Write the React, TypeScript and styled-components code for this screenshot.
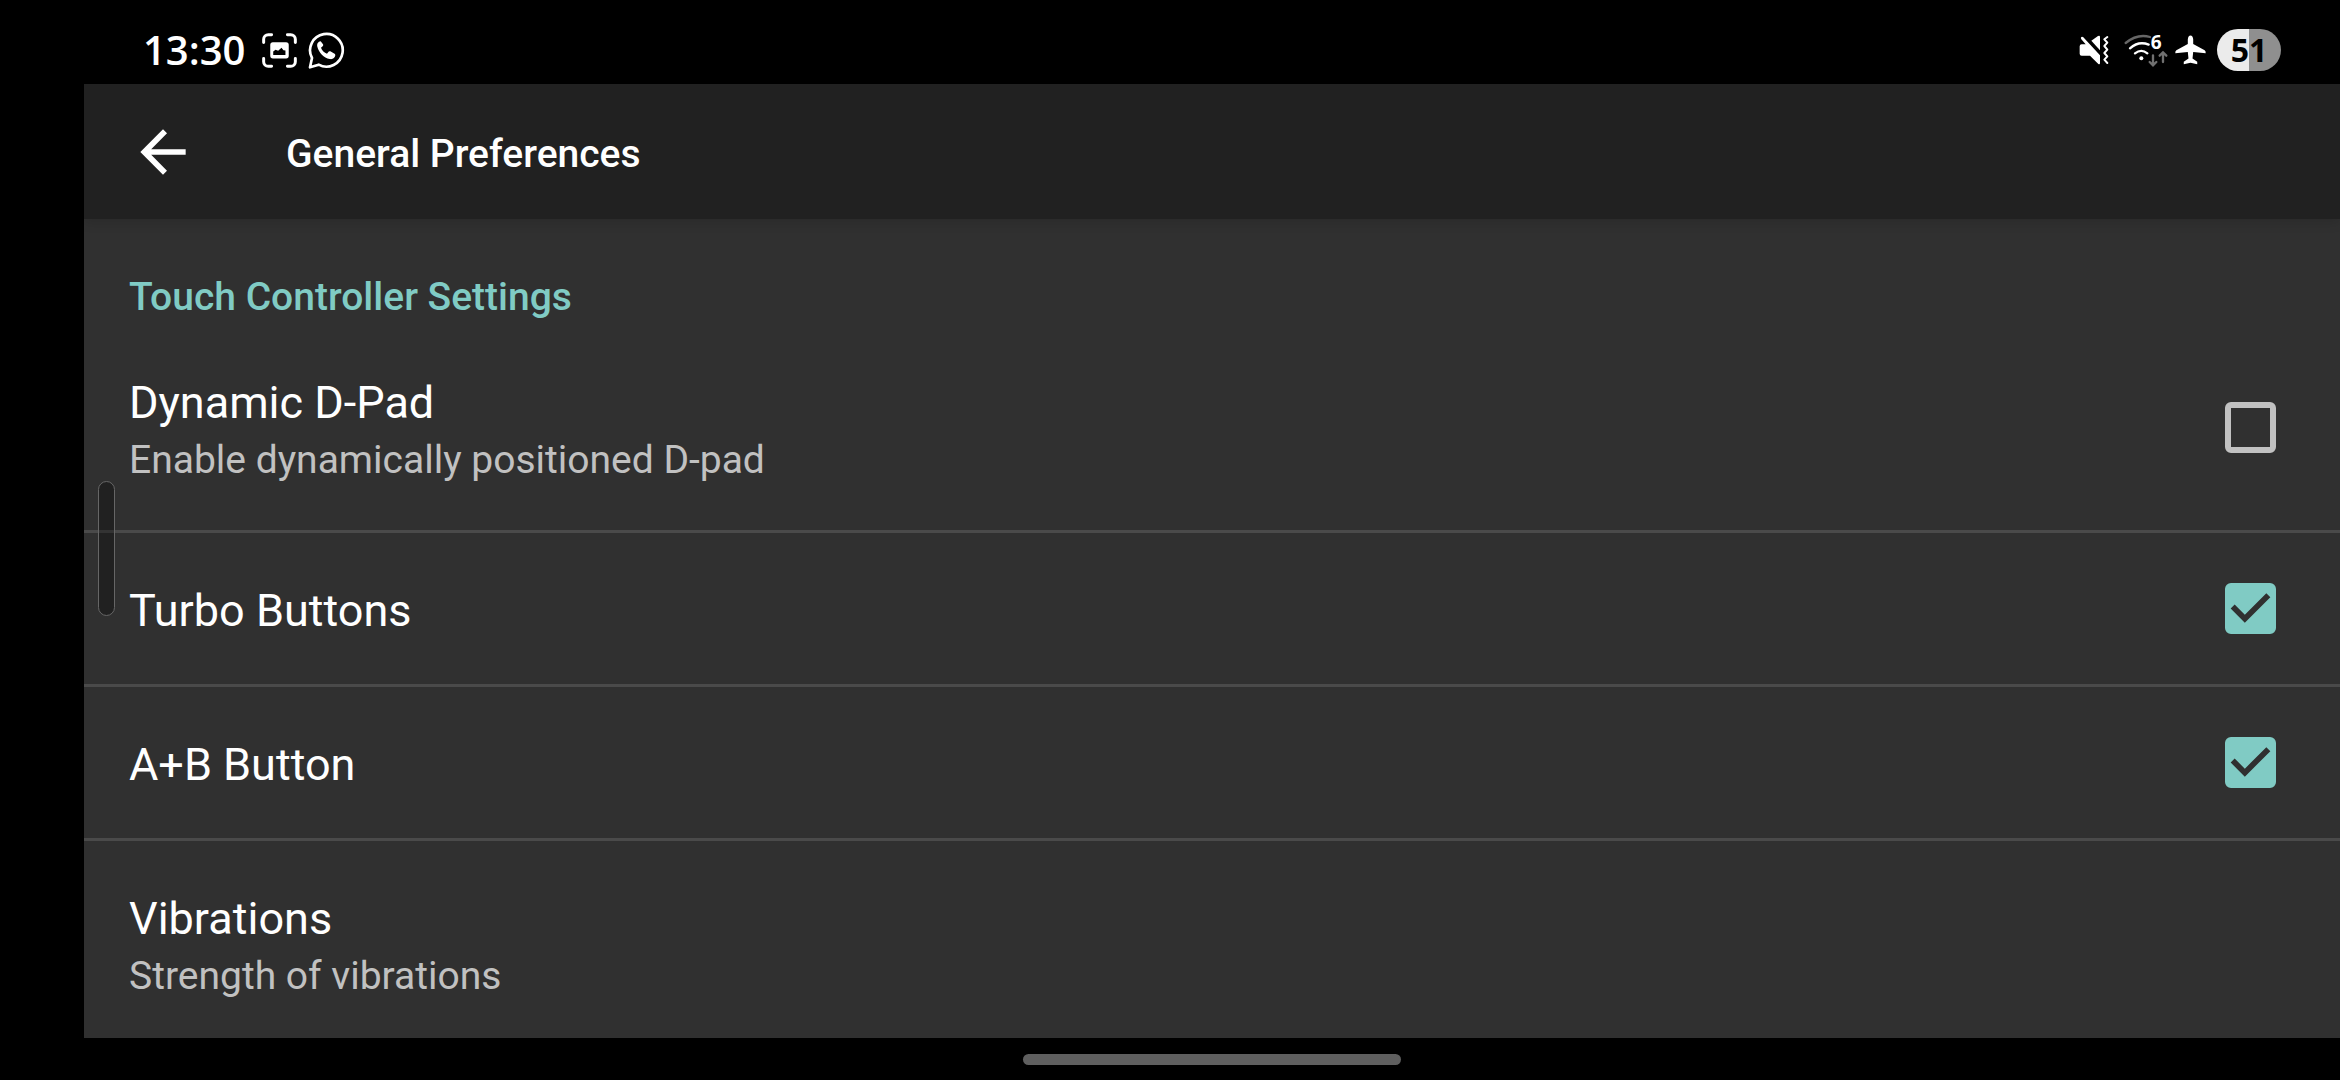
import React, { useState } from "react";
import styled, { createGlobalStyle, css } from "styled-components";

const GlobalStyle = createGlobalStyle`
  *, *::before, *::after { box-sizing: border-box; }
  body {
    margin: 0;
    background: #000;
    color: #fff;
    font-family: Roboto, "Noto Sans", sans-serif;
  }
`;

const Screen = styled.div`
  position: relative;
  display: flex;
  flex-direction: column;
  height: 100vh;
  overflow: hidden;
`;

/* ---------- System status bar ---------- */

const StatusBar = styled.header`
  display: flex;
  align-items: center;
  justify-content: space-between;
  flex: none;
  height: 84px;
  padding: 16px 59px 0 143px;
`;

const StatusGroup = styled.div<{ $gap: number }>`
  display: flex;
  align-items: center;
  gap: ${(p) => p.$gap}px;

  svg {
    display: block;
    flex: none;
  }
`;

const Clock = styled.time`
  margin-right: 6px;
  font: 600 40px/52px "Open Sans", "Noto Sans", sans-serif;
`;

const Battery = styled.div`
  display: flex;
  align-items: center;
  justify-content: center;
  width: 64px;
  height: 42px;
  border-radius: 21px;
  background: linear-gradient(90deg, #ebebeb 50%, #8f8f8f 50%);
  color: #000;
  font: 700 32px/42px "Open Sans", "Noto Sans", sans-serif;
`;

const CaptureIcon = () => (
  <svg width="35" height="35" viewBox="0 0 106 106" fill="none" stroke="#fff" strokeWidth="9" strokeLinecap="round">
    <path d="M5 29V19A14 14 0 0 1 19 5h10M77 5h10a14 14 0 0 1 14 14v10M101 77v10a14 14 0 0 1-14 14H77M29 101H19A14 14 0 0 1 5 87V77" />
    <rect x="25" y="28" width="56" height="49" rx="8" fill="#fff" stroke="none" />
    <path d="M34 67V56l7-5 8 3 10-9 6 7 6 1v14z" fill="#000" stroke="none" />
  </svg>
);

const WhatsAppIcon = () => (
  <svg width="37" height="37" viewBox="0 0 111 111">
    <path
      d="M6 106L12 78A49 49 0 1 1 32 98z"
      fill="none"
      stroke="#fff"
      strokeWidth="8"
      strokeLinejoin="round"
    />
    <path
      d="M38 28c-8 1-12 8-10 16 5 18 19 33 37 37 9 2 16-3 17-11l-1-4-14-8c-3-1-5 0-6 2l-4 5c-8-3-15-10-18-18l5-4c2-2 2-4 1-6z"
      fill="#fff"
    />
  </svg>
);

const MuteIcon = () => (
  <svg width="30" height="30" viewBox="0 0 90 90" fill="#fff">
    <path d="M8 28H20L7 13Q4 8 7 6Q10 4 13 7L63 61V84Q63 90 58 87L33 62H8Q2 62 2 56V34Q2 28 8 28z" />
    <path d="M37 17L57 3Q63 0 63 6V46z" />
    <path
      d="M85 6L76 13L85 23L76 33L85 44L76 54L85 64L76 74L85 84"
      fill="none"
      stroke="#fff"
      strokeWidth="6"
      strokeLinecap="round"
      strokeLinejoin="round"
    />
  </svg>
);

const WifiIcon = () => (
  <svg width="44" height="47" viewBox="0 -21 132 141" fill="none" strokeLinecap="round" strokeWidth="7">
    <path d="M5 27Q40-2 78 9" stroke="#666" />
    <path d="M18 43Q44 20 74 32M33 58Q52 43 70 58" stroke="#fff" />
    <circle cx="52" cy="73" r="6" fill="#fff" />
    <text x="80" y="45" fill="#fff" fontSize="57" fontWeight="700" fontFamily="Open Sans, Noto Sans, sans-serif">6</text>
    <path d="M87 64v29M77 84l10 10 10-10M117 84V56M107 65l10-10 10 10" stroke="#707070" />
  </svg>
);

const PlaneIcon = () => (
  <svg width="31" height="30" viewBox="0 0 92 88" fill="#fff">
    <path d="M46 1Q53 2 54 12V26L88 45Q92 48 91 54L54 50L52 69L66 79V86L46 82L26 86V79L40 69L38 50L1 54Q0 48 4 45L38 26V12Q39 2 46 1z" />
  </svg>
);

/* ---------- App window ---------- */

const Window = styled.main`
  display: flex;
  flex: 1;
  flex-direction: column;
  min-height: 0;
  margin-left: 84px;
  background: #303030;
`;

const Toolbar = styled.div`
  position: relative;
  display: flex;
  align-items: center;
  flex: none;
  height: 135px;
  background: #212121;
  box-shadow: 0 2px 12px rgba(0, 0, 0, 0.16);
`;

const BackButton = styled.button`
  display: grid;
  place-items: center;
  width: 158px;
  height: 100%;
  padding: 0;
  border: 0;
  background: none;
  color: #fff;
`;

const ToolbarTitle = styled.h1`
  margin: 0;
  padding: 4px 0 0 44px;
  font-size: 39px;
  font-weight: 500;
  line-height: 56px;
`;

const Preferences = styled.section`
  flex: 1;
  min-height: 0;
  overflow-y: auto;
  scrollbar-width: none;
`;

const CategoryTitle = styled.h2`
  margin: 0;
  padding: 51px 45px 0;
  color: #80cbc4;
  font-size: 39px;
  font-weight: 500;
  line-height: 55px;
`;

const List = styled.ul`
  margin: 0;
  padding: 0;
  list-style: none;
`;

const Item = styled.li`
  & + & {
    border-top: 3px solid #4a4a4a;
  }
`;

const rowLayout = css`
  display: flex;
  align-items: center;
  justify-content: space-between;
  width: 100%;
  padding: 0 64px 0 45px;
`;

const CheckRow = styled.label`
  ${rowLayout}
`;

const ActionRow = styled.button`
  ${rowLayout}
  border: 0;
  background: none;
  color: inherit;
  font-family: inherit;
  text-align: left;
`;

const RowText = styled.span`
  display: flex;
  flex-direction: column;
  padding: 48px 0 43px;
`;

const Title = styled.span`
  font-size: 45px;
  line-height: 60px;
`;

const Summary = styled.span`
  color: #c1c1c1;
  font-size: 39px;
  line-height: 54px;
`;

const CheckFrame = styled.span`
  display: grid;
  flex: none;

  > * {
    grid-area: 1 / 1;
  }

  svg {
    display: none;
    pointer-events: none;
  }

  input:checked + svg {
    display: block;
  }
`;

const CheckInput = styled.input`
  appearance: none;
  width: 51px;
  height: 51px;
  margin: 0;
  border: 6px solid #c1c1c1;
  border-radius: 6px;

  &:checked {
    border-color: #80cbc4;
    background: #80cbc4;
  }
`;

/* ---------- System overlays ---------- */

const EdgeHandle = styled.div`
  position: absolute;
  top: 481px;
  left: 98px;
  width: 17px;
  height: 135px;
  border: 1px solid #666;
  border-radius: 9px;
  background: rgba(0, 0, 0, 0.3);
`;

const NavBar = styled.footer`
  display: flex;
  justify-content: center;
  flex: none;
  height: 42px;
  margin-left: 84px;
  padding-top: 16px;
`;

const HomePill = styled.div`
  width: 378px;
  height: 11px;
  border-radius: 6px;
  background: #5f5f5f;
`;

type Preference = { id: string; title: string; summary?: string; checked?: boolean };

const preferences: Preference[] = [
  { id: "dpad", title: "Dynamic D-Pad", summary: "Enable dynamically positioned D-pad", checked: false },
  { id: "turbo", title: "Turbo Buttons", checked: true },
  { id: "ab", title: "A+B Button", checked: true },
  { id: "vibrations", title: "Vibrations", summary: "Strength of vibrations" },
];

function PreferenceRow({ pref }: { pref: Preference }) {
  const [checked, setChecked] = useState(Boolean(pref.checked));
  const text = (
    <RowText>
      <Title>{pref.title}</Title>
      {pref.summary && <Summary>{pref.summary}</Summary>}
    </RowText>
  );

  if (pref.checked === undefined) {
    return <ActionRow type="button">{text}</ActionRow>;
  }
  return (
    <CheckRow htmlFor={pref.id}>
      {text}
      <CheckFrame>
        <CheckInput id={pref.id} type="checkbox" checked={checked} onChange={(e) => setChecked(e.target.checked)} />
        <svg width="51" height="51" viewBox="3 3 18 18" fill="#303030">
          <path d="M10 17l-5-5 1.41-1.41L10 14.17l7.59-7.59L19 8z" />
        </svg>
      </CheckFrame>
    </CheckRow>
  );
}

export default function App() {
  return (
    <Screen>
      <GlobalStyle />
      <StatusBar>
        <StatusGroup $gap={11}>
          <Clock>13:30</Clock>
          <CaptureIcon />
          <WhatsAppIcon />
        </StatusGroup>
        <StatusGroup $gap={7}>
          <StatusGroup $gap={15}>
            <MuteIcon />
            <WifiIcon />
          </StatusGroup>
          <StatusGroup $gap={11}>
            <PlaneIcon />
            <Battery>51</Battery>
          </StatusGroup>
        </StatusGroup>
      </StatusBar>
      <Window>
        <Toolbar>
          <BackButton type="button" aria-label="Navigate up">
            <svg width="68" height="68" viewBox="0 0 24 24" fill="currentColor">
              <path d="M20 11H7.83l5.59-5.59L12 4l-8 8 8 8 1.41-1.41L7.83 13H20v-2z" />
            </svg>
          </BackButton>
          <ToolbarTitle>General Preferences</ToolbarTitle>
        </Toolbar>
        <Preferences>
          <CategoryTitle>Touch Controller Settings</CategoryTitle>
          <List>
            {preferences.map((pref) => (
              <Item key={pref.id}>
                <PreferenceRow pref={pref} />
              </Item>
            ))}
          </List>
        </Preferences>
      </Window>
      <NavBar>
        <HomePill />
      </NavBar>
      <EdgeHandle />
    </Screen>
  );
}
